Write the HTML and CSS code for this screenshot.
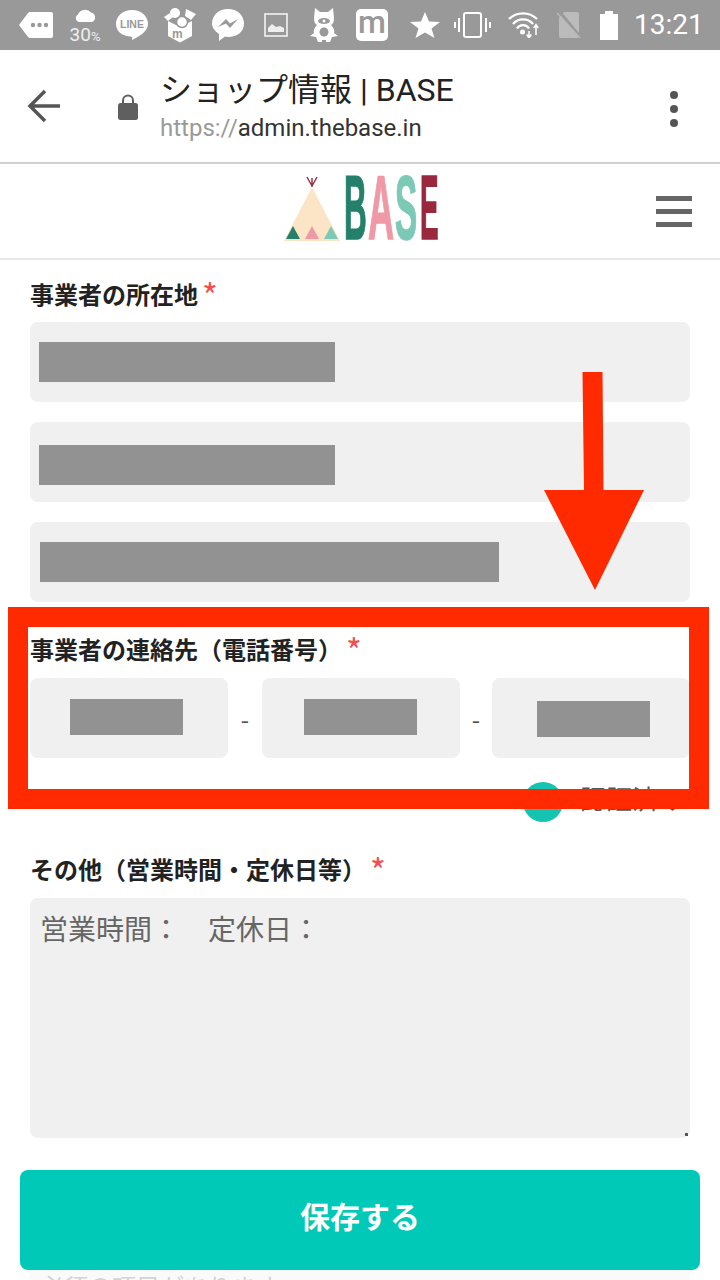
FILE: index.html
```html
<!DOCTYPE html>
<html lang="ja">
<head>
<meta charset="utf-8">
<title>ショップ情報 | BASE</title>
<link rel="stylesheet" href="styles.css">
</head>
<body>
<div class="status">
  <svg class="ic i-msg" viewBox="0 0 34 26"><path d="M0 13 L9 1 Q10 0 11 0 H32 Q34 0 34 2 V24 Q34 26 32 26 H11 Q10 26 9 25Z" fill="#fff"/><circle cx="14" cy="13" r="2.200" fill="#999"/><circle cx="20.500" cy="13" r="2.200" fill="#999"/><circle cx="27" cy="13" r="2.200" fill="#999"/></svg>
  <div class="weather">
    <svg class="cloud" viewBox="0 0 21 15"><path d="M4 15 A4 4 0 0 1 3 7.500 A7.500 7 0 0 1 16 5.500 A5 5 0 0 1 17 15Z" fill="#fff"/></svg>
    <span class="pct">30<small>%</small></span>
  </div>
  <svg class="ic i-line" viewBox="0 0 32 30"><path d="M16 0 C25 0 32 6 32 14 C32 21 24 26 16 30 C16.500 27 16 26.500 14 26.500 C6 26 0 21 0 14 C0 6 7 0 16 0Z" fill="#fff"/><text x="16" y="18" class="line-txt">LINE</text></svg>
  <svg class="ic i-box" viewBox="0 0 32 36"><path d="M4 14 L16 20 L28 14 V29 L16 35.500 L4 29Z" fill="#fff"/><path d="M0 10 L6 6 L9 10 L4 14Z M22 2 L32 7 L27 13 L21 9Z" fill="#fff"/><circle cx="11" cy="6" r="5" fill="#fff"/><circle cx="18" cy="15" r="5.500" fill="#fff" stroke="#999" stroke-width="1.500"/><text x="8" y="31" class="m-txt">m</text></svg>
  <svg class="ic i-fb" viewBox="0 0 32 32"><path d="M16 0 C25 0 32 6 32 14.500 C32 23 25 28 16 28 L13 27.500 L7 32 L7 25 C3 22 0 19 0 14.500 C0 6 7 0 16 0Z" fill="#fff"/><path d="M6 18 L14 10 L18 14.500 L26 10 L18 19 L14 14.500Z" fill="#999"/></svg>
  <svg class="ic i-img" viewBox="0 0 24 24"><rect x="1" y="1" width="22" height="22" fill="none" stroke="#eee" stroke-width="1.700"/><path d="M4 19 V15 L8 11 L12 14 L16 13 L20 15 V19Z" fill="#eee"/></svg>
  <svg class="ic i-mascot" viewBox="0 0 28 34"><path d="M5 0 L10 4 H18 L23 0 L24 10 C24 14 23 16 21 17 C24 20 25 23 24 25 L28 28 L22 29 L20 34 H16 V32 H12 V34 H8 L6 29 L0 28 L4 25 C3 23 4 20 7 17 C5 16 4 14 4 10Z" fill="#fff"/><ellipse cx="14" cy="13" rx="6" ry="3" fill="#999"/><circle cx="14" cy="13" r="1.500" fill="#fff"/><circle cx="14" cy="24" r="4.500" fill="#999"/></svg>
  <div class="m-badge">m</div>
  <svg class="ic i-star" viewBox="0 0 30 26"><path d="M15 0 L19 9.500 L30 10 L21.500 16.500 L24.500 26 L15 20.500 L5.500 26 L8.500 16.500 L0 10 L11 9.500Z" fill="#fff"/></svg>
  <svg class="ic i-vib" viewBox="0 0 37 26"><rect x="10" y="1" width="17" height="24" rx="2" fill="none" stroke="#fff" stroke-width="2"/><path d="M5 6 V20 M1 10 V16 M32 6 V20 M36 10 V16" stroke="#fff" stroke-width="2"/></svg>
  <svg class="ic i-wifi" viewBox="0 0 32 26"><path d="M1 7 A20 20 0 0 1 29 7 M5 12 A13 13 0 0 1 25 12 M9 16.500 A7 7 0 0 1 21 16.500" fill="none" stroke="#fff" stroke-width="2.300"/><circle cx="14.500" cy="20" r="2.500" fill="#fff"/><path d="M21 19 V25 M18.700 22.500 L21 26 L23.300 22.500 M28 23 V13 M25.700 16 L28 12.500 L30.300 16" fill="none" stroke="#fff" stroke-width="1.500"/></svg>
  <svg class="ic i-sim" viewBox="0 0 25 26"><path d="M7 0 H20 Q22 0 22 2 V24 Q22 26 20 26 H4 Q2 26 2 24 V6Z" fill="#bbb"/><path d="M2 -1 L24 26" stroke="#999" stroke-width="3"/><path d="M0 1 L24 27" stroke="#bbb" stroke-width="1.300"/></svg>
  <svg class="ic i-batt" viewBox="0 0 18 29"><path d="M5 0 H13 V3 H18 V29 H0 V3 H5Z" fill="#fff"/></svg>
  <span class="time">13:21</span>
</div>

<div class="toolbar">
  <svg class="back" viewBox="0 0 34 34"><path d="M33 17 H4 M18 2 L3 17 L18 32" fill="none" stroke="#555" stroke-width="3.500"/></svg>
  <svg class="lock" viewBox="0 0 20 26"><path d="M5 10 V6.500 A5 5 0 0 1 15 6.500 V10" fill="none" stroke="#5f5f5f" stroke-width="2"/><rect y="9" width="20" height="17" rx="2.500" fill="#5f5f5f"/></svg>
  <div class="titles">
    <div class="page-title">ショップ情報 | BASE</div>
    <div class="url"><span class="scheme">https://</span>admin.thebase.in</div>
  </div>
  <div class="kebab"><i></i><i></i><i></i></div>
</div>

<header class="app-head">
  <div class="logo">
    <svg class="tipi" viewBox="0 0 56 66"><path d="M28 11 L56 65 H0Z" fill="#fbe5c6"/><path d="M28 11 V2 M28 10 L23 1 M28 10 L33 1" stroke="#99283f" stroke-width="1.400" fill="none"/><path d="M9 50 L16 63 H2Z" fill="#24806a"/><path d="M28 50 L35 63 H21Z" fill="#f099a6"/><path d="M47 50 L54 63 H40Z" fill="#7cc9b6"/></svg>
    <div class="word"><span class="l-b">B</span><span class="l-a">A</span><span class="l-s">S</span><span class="l-e">E</span></div>
  </div>
  <div class="burger"><i></i><i></i><i></i></div>
</header>

<main class="form">
  <label class="field-label first">事業者の所在地<em>*</em></label>
  <div class="stack">
    <div class="input"><span class="mask w296"></span></div>
    <div class="input"><span class="mask w296 low"></span></div>
    <div class="input"><span class="mask w459"></span></div>
  </div>

  <label class="field-label tel-label">事業者の連絡先（電話番号）<em>*</em></label>
  <div class="tel">
    <div class="input tel-input tel-a"><span class="mask tel-mask"></span></div>
    <span class="dash dash-a">-</span>
    <div class="input tel-input tel-b"><span class="mask tel-mask"></span></div>
    <span class="dash dash-b">-</span>
    <div class="input tel-input tel-c"><span class="mask tel-mask tel-low"></span></div>
  </div>
  <div class="verified"><span class="dot"></span><span class="verified-txt">認証済み</span></div>

  <label class="field-label other">その他（営業時間・定休日等）<em>*</em></label>
  <div class="textarea">営業時間：　定休日：<span class="grip"></span></div>
</main>

<div class="below">必須の項目があります</div>
<button class="save">保存する</button>

<div class="highlight"></div>
<svg class="arrow" viewBox="0 0 100 218"><path d="M38.500 0 H58.500 L59.500 118 H100 L51 218 L0 118 H40Z" fill="#ff2a00"/></svg>
</body>
</html>
```
FILE: styles.css
```css
* { box-sizing: border-box; }
html, body { margin: 0; padding: 0; }
body {
  position: relative;
  width: 720px;
  height: 1280px;
  overflow: hidden;
  background: #fff;
  font-family: "Noto Sans CJK JP", "Noto Sans", sans-serif;
  color: #222;
}
.status {
  height: 50px;
  background: #999;
  display: flex;
  align-items: center;
  padding-left: 19px;
}
.ic { display: block; flex: none; }
.i-msg { width: 34px; height: 26px; }
.weather { width: 30px; margin-left: 17px; display: flex; flex-direction: column; align-items: center; }
.cloud { width: 21px; height: 15px; margin-top: 3px; display: block; }
.pct { font: 400 19px/19px Roboto, sans-serif; color: #eee; white-space: nowrap; margin-top: 3px; }
.pct small { font-size: 13px; }
.i-line { width: 32px; height: 30px; margin-left: 16px; }
.i-box { width: 32px; height: 36px; margin-left: 16px; }
.i-fb { width: 32px; height: 32px; margin-left: 16px; }
.i-img { width: 24px; height: 24px; margin-left: 20px; }
.i-mascot { width: 28px; height: 34px; margin-left: 22px; }
.m-badge {
  width: 32px; height: 32px; margin-left: 18px; flex: none;
  background: #fff; border-radius: 5px;
  color: #999; font: 500 32px/27px Roboto, sans-serif; text-align: center;
}
.line-txt { font: 700 10.500px "Liberation Sans", sans-serif; fill: #999; text-anchor: middle; }
.m-txt { font: 700 12px "Liberation Sans", sans-serif; fill: #999; }
.i-star { width: 30px; height: 26px; margin-left: 22px; }
.i-vib { width: 37px; height: 26px; margin-left: 14px; }
.i-wifi { width: 32px; height: 26px; margin-left: 17px; }
.i-sim { width: 25px; height: 26px; margin-left: 17px; }
.i-batt { width: 18px; height: 29px; margin-left: 18px; }
.time { font: 400 28px/34px Roboto, sans-serif; color: #fff; margin-left: 16px; white-space: nowrap; }

.toolbar {
  height: 114px;
  display: flex;
  align-items: flex-start;
  border-bottom: 2px solid #d0d0d0;
  padding-left: 27px;
}
.back { width: 34px; height: 34px; margin-top: 39px; flex: none; }
.lock { width: 20px; height: 26px; margin: 44px 0 0 57px; flex: none; }
.titles { margin-left: 22px; padding-top: 19px; flex: 1; }
.page-title { font: 400 32px/42px Roboto, "Noto Sans CJK JP", sans-serif; color: #222; white-space: nowrap; }
.url { font: 400 24px/30px Roboto, sans-serif; color: #333; margin-top: 2px; }
.scheme { color: #9a9a9a; }
.kebab { display: flex; flex-direction: column; gap: 6px; margin: 41px 42px 0 0; }
.kebab i { display: block; width: 8px; height: 8px; border-radius: 50%; background: #555; }

.app-head {
  height: 96px;
  border-bottom: 2px solid #e8e8e8;
  position: relative;
  display: flex;
  justify-content: center;
  padding-top: 12px;
}
.logo { display: flex; align-items: flex-start; gap: 6px; margin-left: 1px; }
.tipi { width: 56px; height: 66px; display: block; }
.word {
  display: flex;
  font: 700 90px/64px "Liberation Sans", sans-serif;
  height: 64px;
  width: 94px;
  margin-left: -2px;
}
.word span { display: block; transform-origin: 0 50%; -webkit-text-stroke: 1.500px currentColor; }
.l-b { color: #24806a; width: 24px; transform: scaleX(0.35); }
.l-a { color: #f099a6; width: 27px; transform: scaleX(0.40); }
.l-s { color: #7cc9b6; width: 25px; transform: scaleX(0.37); }
.l-e { color: #99283f; width: 19px; transform: scaleX(0.31); }
.burger { position: absolute; right: 28px; top: 32px; display: flex; flex-direction: column; gap: 8px; }
.burger i { display: block; width: 36px; height: 5px; background: #666; }

.form { padding: 0 30px; }
.field-label { display: block; font-weight: 700; font-size: 24px; line-height: 36px; color: #222; white-space: nowrap; }
.field-label em { font-style: normal; color: #f0504f; font-size: 34px; margin-left: 4px; line-height: 20px; font-weight: 400; vertical-align: -5px; }
.first { margin-top: 16px; }
.stack { display: flex; flex-direction: column; gap: 20px; margin-top: 10px; }
.input { height: 80px; background: #f0f0f0; border-radius: 8px; display: flex; align-items: center; }
.mask { display: block; background: #929292; height: 40px; }
.w296 { width: 296px; margin-left: 9px; }
.w459 { width: 459px; margin-left: 10px; }
.low { transform: translateY(3px); }
.tel-label { margin-top: 29px; }
.tel { display: flex; align-items: center; margin-top: 11px; }
.tel-input { width: 198px; }
.tel-a { padding-left: 40px; }
.tel-b { padding-left: 42px; }
.tel-c { padding-left: 45px; }
.tel-mask { width: 113px; height: 36px; margin-top: -2px; }
.tel-low { margin-top: 2px; }
.dash { font-size: 24px; color: #555; text-align: center; }
.dash-a { width: 34px; }
.dash-b { width: 32px; }
.verified { display: flex; align-items: center; justify-content: flex-end; gap: 17px; margin-top: 24px; height: 40px; padding-right: 6px; }
.dot { width: 40px; height: 40px; border-radius: 50%; background: #14c3b0; }
.verified-txt { font-size: 26px; line-height: 40px; color: #555; margin-bottom: 8px; }
.other { margin-top: 29px; }
.textarea {
  position: relative;
  height: 240px;
  margin-top: 11px;
  background: #f0f0f0;
  border-radius: 8px;
  padding: 10px 10px;
  font-size: 28px;
  line-height: 40px;
  color: #666;
}
.grip { position: absolute; right: 2px; bottom: 2px; width: 3px; height: 3px; background: #555; }

.below {
  position: absolute; left: 30px; top: 1270px; width: 660px; height: 10px;
  background: #fafafa; color: #d4d4d4; font-size: 24px; line-height: 28px; padding: 2px 0 0 10px; overflow: hidden;
}
.save {
  position: absolute; left: 20px; top: 1170px; width: 680px; height: 100px;
  padding: 0 0 10px;
  background: #00c9b7; color: #fff; border: 0; border-radius: 8px;
  font: 700 30px/40px "Noto Sans CJK JP", sans-serif;
}
.highlight {
  position: absolute; left: 8px; top: 607px; width: 701px; height: 202px;
  border: 20px solid #ff2a00;
}
.arrow { position: absolute; left: 544px; top: 372px; width: 100px; height: 218px; }
```
